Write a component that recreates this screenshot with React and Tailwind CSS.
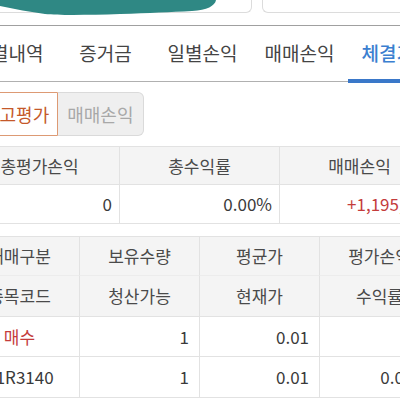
import React from 'react'

const font = { fontFamily: '"Noto Sans CJK KR", "Noto Sans", sans-serif' }

const tabs = ['체결내역', '증거금', '일별손익', '매매손익', '체결기준']

function Cell({ children, className = '' }) {
  return (
    <div className={`flex items-center border-r border-b border-[#e2e2e2] ${className}`}>
      {children}
    </div>
  )
}

export default function App() {
  return (
    <div className="w-[400px] h-[400px] overflow-hidden bg-white text-[#3a3a3a]" style={font}>
      {/* search boxes, top cut off */}
      <div className="relative flex gap-[10px] mr-[-20px]">
        <div className="w-[252px] h-[13px] border-r border-b border-[#dcdcdc] rounded-br-[6px]" />
        <div className="flex-1 h-[13px] border-l border-b border-[#dcdcdc] rounded-bl-[6px]" />
        <svg className="absolute left-0 top-0" width="220" height="17" viewBox="0 0 220 17">
          <path
            d="M0,0 L216,0 C215,6 207,10 192,11 C170,12 150,13 120,14 C90,15 60,15.5 45,14 C30,12 15,9 0,6 Z"
            fill="#2f8884"
          />
        </svg>
      </div>
      <div className="mt-[12px] h-px bg-[#a0a0a0]" />

      {/* tabs */}
      <div className="ml-[-40px] flex h-[56px] border-b border-[#b0b0b0]">
        {tabs.map((t, i) => (
          <div
            key={t}
            className={`relative w-[97px] shrink-0 flex items-center justify-center text-[19px] ${
              i === 4 ? 'text-[#3b7fd0] font-medium' : 'text-[#444]'
            }`}
          >
            {t}
            {i === 4 && <span className="absolute left-0 right-0 bottom-[-2px] h-[4px] bg-[#3a78c9]" />}
          </div>
        ))}
      </div>

      {/* toggle */}
      <div className="mt-[10px] ml-[-26px] flex h-[44px] text-[18px]">
        <div className="flex items-center px-[8px] border border-[#dd9a74] bg-white text-[#c5592a] rounded-l-[6px]">
          잔고평가
        </div>
        <div className="flex items-center px-[9px] border border-l-0 border-[#dadada] bg-[#efefef] text-[#a8a8a8] rounded-r-[6px]">
          매매손익
        </div>
      </div>

      {/* summary */}
      <div className="mt-[10px] ml-[-40px] w-[480px] grid grid-cols-[160px_160px_160px] border-t border-[#e2e2e2] text-[17px]">
        <Cell className="h-[38px] justify-center bg-[#f4f4f4] text-[#4a4a4a]">총평가손익</Cell>
        <Cell className="h-[38px] justify-center bg-[#f4f4f4] text-[#4a4a4a]">총수익률</Cell>
        <Cell className="h-[38px] justify-center bg-[#f4f4f4] text-[#4a4a4a]">매매손익</Cell>
        <Cell className="h-[39px] justify-end pr-[7px]">0</Cell>
        <Cell className="h-[39px] justify-end pr-[7px]">0.00%</Cell>
        <Cell className="h-[39px] justify-end pr-[7px] text-[#c43c3c]">+1,195,000</Cell>
      </div>

      {/* positions */}
      <div className="mt-[12px] ml-[-40px] w-[480px] grid grid-cols-[120px_120px_120px_120px] border-t border-[#e2e2e2] text-[17px]">
        <Cell className="h-[39px] justify-center bg-[#f4f4f4] text-[#4a4a4a] border-b-[#ececec]">매매구분</Cell>
        <Cell className="h-[39px] justify-center bg-[#f4f4f4] text-[#4a4a4a] border-b-[#ececec]">보유수량</Cell>
        <Cell className="h-[39px] justify-center bg-[#f4f4f4] text-[#4a4a4a] border-b-[#ececec]">평균가</Cell>
        <Cell className="h-[39px] justify-center bg-[#f4f4f4] text-[#4a4a4a] border-b-[#ececec]">평가손익</Cell>
        <Cell className="h-[41px] justify-center bg-[#f4f4f4] text-[#4a4a4a]">종목코드</Cell>
        <Cell className="h-[41px] justify-center bg-[#f4f4f4] text-[#4a4a4a]">청산가능</Cell>
        <Cell className="h-[41px] justify-center bg-[#f4f4f4] text-[#4a4a4a]">현재가</Cell>
        <Cell className="h-[41px] justify-center bg-[#f4f4f4] text-[#4a4a4a]">수익률</Cell>

        <Cell className="h-[40px] justify-center text-[#c43c3c]">매수</Cell>
        <Cell className="h-[40px] justify-end pr-[10px]">1</Cell>
        <Cell className="h-[40px] justify-end pr-[10px]">0.01</Cell>
        <Cell className="h-[40px] justify-end pr-[10px]">0</Cell>
        <Cell className="h-[41px] justify-center">A1R3140</Cell>
        <Cell className="h-[41px] justify-end pr-[10px]">1</Cell>
        <Cell className="h-[41px] justify-end pr-[10px]">0.01</Cell>
        <Cell className="h-[41px] justify-end pr-[10px]">0.00%</Cell>
      </div>
    </div>
  )
}
